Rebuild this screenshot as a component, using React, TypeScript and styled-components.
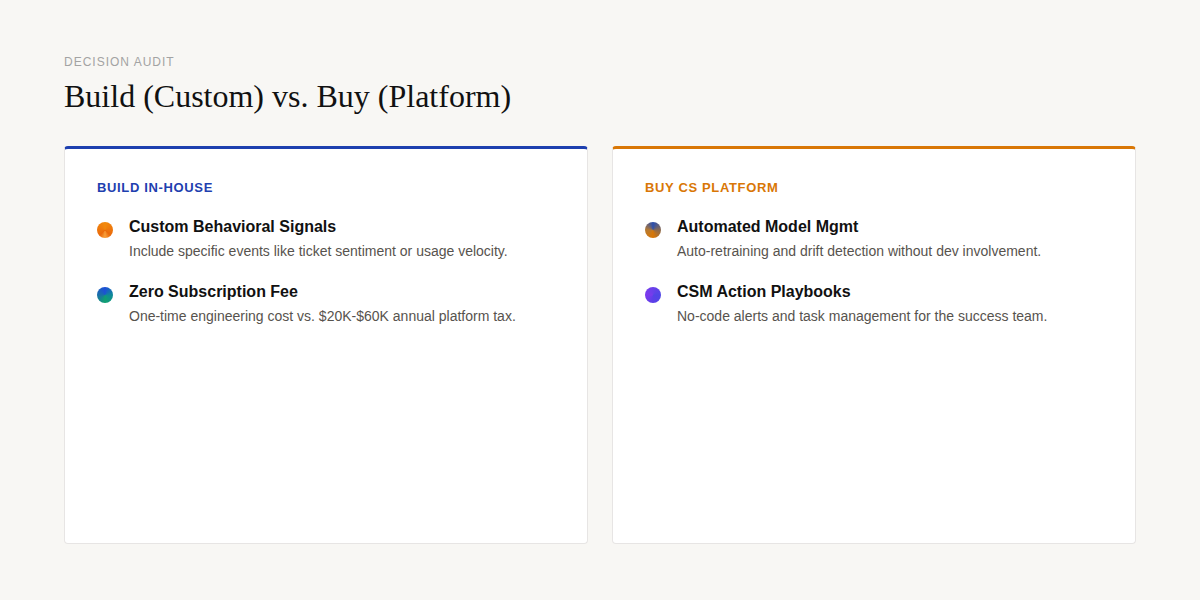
import React from "react";
import styled, { createGlobalStyle } from "styled-components";

const Global = createGlobalStyle`
  html, body { margin: 0; padding: 0; background: #f8f7f4; }
  #root { width: 1200px; height: 600px; }
`;

const Page = styled.main`
  box-sizing: border-box;
  width: 1200px;
  height: 600px;
  padding: 55px 64px 56px;
  display: flex;
  flex-direction: column;
  background: #f8f7f4;
  font-family: "Liberation Sans", Arial, sans-serif;
`;

const Eyebrow = styled.div`
  font-size: 12px;
  line-height: 14px;
  letter-spacing: 1px;
  color: #a3a3a3;
  text-transform: uppercase;
`;

const Title = styled.h1`
  margin: 7px 0 30px;
  font-family: "Liberation Serif", "Times New Roman", serif;
  font-size: 32px;
  line-height: 40px;
  font-weight: 400;
  color: #111111;
`;

const Columns = styled.div`
  flex: 1;
  display: grid;
  grid-template-columns: 1fr 1fr;
  gap: 24px;
`;

const Card = styled.section<{ $accent: string }>`
  box-sizing: border-box;
  background: #ffffff;
  border: 1px solid #e7e5e4;
  border-top: 3px solid ${(p) => p.$accent};
  border-radius: 4px;
  padding: 31px 32px 32px;
`;

const CardLabel = styled.h2<{ $accent: string }>`
  margin: 0 0 22px;
  font-size: 13px;
  line-height: 15px;
  font-weight: 700;
  letter-spacing: 0.65px;
  text-transform: uppercase;
  color: ${(p) => p.$accent};
`;

const List = styled.ul`
  list-style: none;
  margin: 0;
  padding: 0;
  display: flex;
  flex-direction: column;
  gap: 20px;
`;

const Item = styled.li`
  display: flex;
  gap: 16px;
  align-items: flex-start;
`;

const Dot = styled.span<{ $fill: string }>`
  flex: none;
  width: 16px;
  height: 16px;
  margin-top: 5px;
  border-radius: 50%;
  background: ${(p) => p.$fill};
`;

const ItemBody = styled.div`
  display: flex;
  flex-direction: column;
  gap: 4px;
`;

const ItemTitle = styled.h3`
  margin: 0;
  font-size: 16px;
  line-height: 20px;
  font-weight: 700;
  color: #111111;
`;

const ItemText = styled.p`
  margin: 0;
  font-size: 14px;
  line-height: 21px;
  color: #57534e;
`;

const columns = [
  {
    accent: "#1e40af",
    label: "Build in-house",
    items: [
      {
        fill: "conic-gradient(from 180deg, #f9a03a, #ea6a0c 12%, #f28a0c 50%, #ea6a0c 88%, #f9a03a)",
        title: "Custom Behavioral Signals",
        text: "Include specific events like ticket sentiment or usage velocity.",
      },
      {
        fill: "conic-gradient(from 180deg, #10a070, #1a6fa8 25%, #1d4ed8 50%, #0f8a98 75%, #10a070)",
        title: "Zero Subscription Fee",
        text: "One-time engineering cost vs. $20K-$60K annual platform tax.",
      },
    ],
  },
  {
    accent: "#d97706",
    label: "Buy CS Platform",
    items: [
      {
        fill: "conic-gradient(from 180deg, #d97706, #b87a30 25%, #2a4fae 50%, #8a6a50 75%, #d97706)",
        title: "Automated Model Mgmt",
        text: "Auto-retraining and drift detection without dev involvement.",
      },
      {
        fill: "conic-gradient(from 180deg, #5b3fe8, #7c3aed 25%, #6a40ea 50%, #4f46e5 75%, #5b3fe8)",
        title: "CSM Action Playbooks",
        text: "No-code alerts and task management for the success team.",
      },
    ],
  },
];

export default function App() {
  return (
    <Page>
      <Global />
      <Eyebrow>Decision Audit</Eyebrow>
      <Title>Build (Custom) vs. Buy (Platform)</Title>
      <Columns>
        {columns.map((c) => (
          <Card key={c.label} $accent={c.accent}>
            <CardLabel $accent={c.accent}>{c.label}</CardLabel>
            <List>
              {c.items.map((i) => (
                <Item key={i.title}>
                  <Dot $fill={i.fill} />
                  <ItemBody>
                    <ItemTitle>{i.title}</ItemTitle>
                    <ItemText>{i.text}</ItemText>
                  </ItemBody>
                </Item>
              ))}
            </List>
          </Card>
        ))}
      </Columns>
    </Page>
  );
}
